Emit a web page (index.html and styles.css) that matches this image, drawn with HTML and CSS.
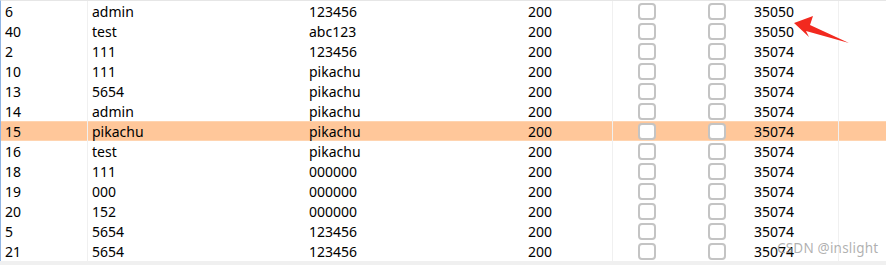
FILE: index.html
```html
<!DOCTYPE html>
<html>
<head>
<meta charset="utf-8">
<link rel="stylesheet" href="styles.css">
</head>
<body>
<div class="view">
  <div class="table">
    <div class="row"><div class="c c1">6</div><div class="c c2">admin</div><div class="c c3">123456</div><div class="c c4">200</div><div class="c c5"><span class="cb"></span><span class="cb"></span><span class="num">35050</span></div><div class="c c6"></div></div>
    <div class="row"><div class="c c1">40</div><div class="c c2">test</div><div class="c c3">abc123</div><div class="c c4">200</div><div class="c c5"><span class="cb"></span><span class="cb"></span><span class="num">35050</span></div><div class="c c6"></div></div>
    <div class="row"><div class="c c1">2</div><div class="c c2">111</div><div class="c c3">123456</div><div class="c c4">200</div><div class="c c5"><span class="cb"></span><span class="cb"></span><span class="num">35074</span></div><div class="c c6"></div></div>
    <div class="row"><div class="c c1">10</div><div class="c c2">111</div><div class="c c3">pikachu</div><div class="c c4">200</div><div class="c c5"><span class="cb"></span><span class="cb"></span><span class="num">35074</span></div><div class="c c6"></div></div>
    <div class="row"><div class="c c1">13</div><div class="c c2">5654</div><div class="c c3">pikachu</div><div class="c c4">200</div><div class="c c5"><span class="cb"></span><span class="cb"></span><span class="num">35074</span></div><div class="c c6"></div></div>
    <div class="row"><div class="c c1">14</div><div class="c c2">admin</div><div class="c c3">pikachu</div><div class="c c4">200</div><div class="c c5"><span class="cb"></span><span class="cb"></span><span class="num">35074</span></div><div class="c c6"></div></div>
    <div class="row sel"><div class="c c1">15</div><div class="c c2">pikachu</div><div class="c c3">pikachu</div><div class="c c4">200</div><div class="c c5"><span class="cb"></span><span class="cb"></span><span class="num">35074</span></div><div class="c c6"></div></div>
    <div class="row"><div class="c c1">16</div><div class="c c2">test</div><div class="c c3">pikachu</div><div class="c c4">200</div><div class="c c5"><span class="cb"></span><span class="cb"></span><span class="num">35074</span></div><div class="c c6"></div></div>
    <div class="row"><div class="c c1">18</div><div class="c c2">111</div><div class="c c3">000000</div><div class="c c4">200</div><div class="c c5"><span class="cb"></span><span class="cb"></span><span class="num">35074</span></div><div class="c c6"></div></div>
    <div class="row"><div class="c c1">19</div><div class="c c2">000</div><div class="c c3">000000</div><div class="c c4">200</div><div class="c c5"><span class="cb"></span><span class="cb"></span><span class="num">35074</span></div><div class="c c6"></div></div>
    <div class="row"><div class="c c1">20</div><div class="c c2">152</div><div class="c c3">000000</div><div class="c c4">200</div><div class="c c5"><span class="cb"></span><span class="cb"></span><span class="num">35074</span></div><div class="c c6"></div></div>
    <div class="row"><div class="c c1">5</div><div class="c c2">5654</div><div class="c c3">123456</div><div class="c c4">200</div><div class="c c5"><span class="cb"></span><span class="cb"></span><span class="num">35074</span></div><div class="c c6"></div></div>
    <div class="row"><div class="c c1">21</div><div class="c c2">5654</div><div class="c c3">123456</div><div class="c c4">200</div><div class="c c5"><span class="cb"></span><span class="cb"></span><span class="num">35074</span></div><div class="c c6"></div></div>
  </div>
  <div class="hscroll"></div>
  <svg class="arrow" width="886" height="265" viewBox="0 0 886 265">
    <polygon points="794,23 813,16 810,25 849,43 806,31 809,37" fill="#f2291f"/>
  </svg>
  <div class="watermark">CSDN @inslight</div>
</div>
</body>
</html>
```
FILE: styles.css
```css
html, body {
  margin: 0;
  padding: 0;
  background: #ffffff;
}
.view {
  position: relative;
  width: 886px;
  height: 265px;
  overflow: hidden;
  font-family: "Noto Sans", "Liberation Sans", sans-serif;
  font-size: 14px;
  color: #000000;
}
.table {
  border-top: 1px solid #e6e6e6;
  border-left: 1px solid #8fb4e4;
}
.row {
  display: grid;
  grid-template-columns: 87px 217px 219px 89px 226px 1fr;
  height: 20px;
}
.row.sel {
  background: #ffc79a;
  box-shadow: inset 0 1px 0 #ffd4b0, inset 0 -1px 0 #ffd4b0;
}
.c {
  box-sizing: border-box;
  height: 20px;
  padding: 2px 0 0 4px;
  line-height: 18px;
  white-space: nowrap;
}
.c1, .c4, .c5 {
  border-right: 1px solid #f0f0f0;
}
.c5 {
  display: flex;
  align-items: flex-start;
  padding-left: 25px;
  padding-top: 0;
}
.cb {
  box-sizing: border-box;
  width: 18px;
  height: 17px;
  margin-top: 2px;
  border: 2px solid #c4c4c4;
  border-radius: 4px;
  background: #ffffff;
  margin-right: 52px;
}
.cb + .cb {
  margin-right: 28px;
}
.num {
  padding-top: 2px;
  line-height: 18px;
}
.hscroll {
  height: 4px;
  background: #f0f0f0;
}
.arrow {
  position: absolute;
  left: 0;
  top: 0;
}
.watermark {
  position: absolute;
  left: 777px;
  top: 239px;
  font-size: 13.5px;
  line-height: 18px;
  color: rgba(150, 150, 150, 0.75);
  letter-spacing: 0.2px;
}
```
